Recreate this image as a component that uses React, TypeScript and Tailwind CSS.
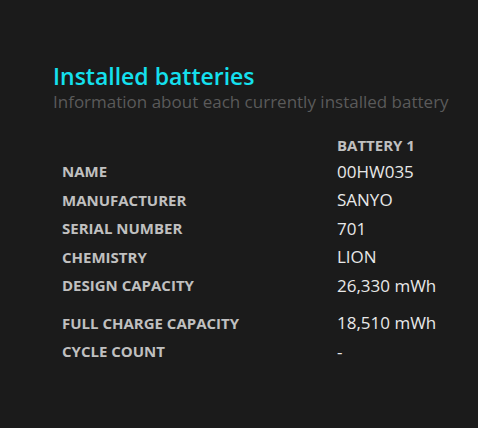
import React from "react";

const rows: { label: string; value: string; gap?: boolean }[] = [
  { label: "NAME", value: "00HW035" },
  { label: "MANUFACTURER", value: "SANYO" },
  { label: "SERIAL NUMBER", value: "701" },
  { label: "CHEMISTRY", value: "LION" },
  { label: "DESIGN CAPACITY", value: "26,330 mWh" },
  { label: "FULL CHARGE CAPACITY", value: "18,510 mWh", gap: true },
  { label: "CYCLE COUNT", value: "-" },
];

export default function App() {
  return (
    <div
      className="w-[478px] h-[428px] bg-[#1b1b1b] pt-[61px] pl-[53px]"
      style={{ fontFamily: '"Open Sans", "Noto Sans", sans-serif' }}
    >
      <h1 className="text-[23px] leading-[30px] font-semibold text-[#14e0ee]">
        Installed batteries
      </h1>
      <p className="text-[17px] leading-[22px] text-[#5a5a5a]">
        Information about each currently installed battery
      </p>

      <div className="mt-[20px] pl-[9px]">
        <div className="flex h-[24px] items-center">
          <div className="w-[275px]" />
          <div className="text-[15px] font-bold text-[#c0c0c0]">BATTERY 1</div>
        </div>
        {rows.map((r) => (
          <div
            key={r.label}
            className={`flex h-[28.5px] items-center ${r.gap ? "mt-[9px]" : ""}`}
          >
            <div className="w-[275px] text-[15px] font-bold text-[#c0c0c0]">
              {r.label}
            </div>
            <div className="text-[17px] text-[#e8e8e8]">{r.value}</div>
          </div>
        ))}
      </div>
    </div>
  );
}
